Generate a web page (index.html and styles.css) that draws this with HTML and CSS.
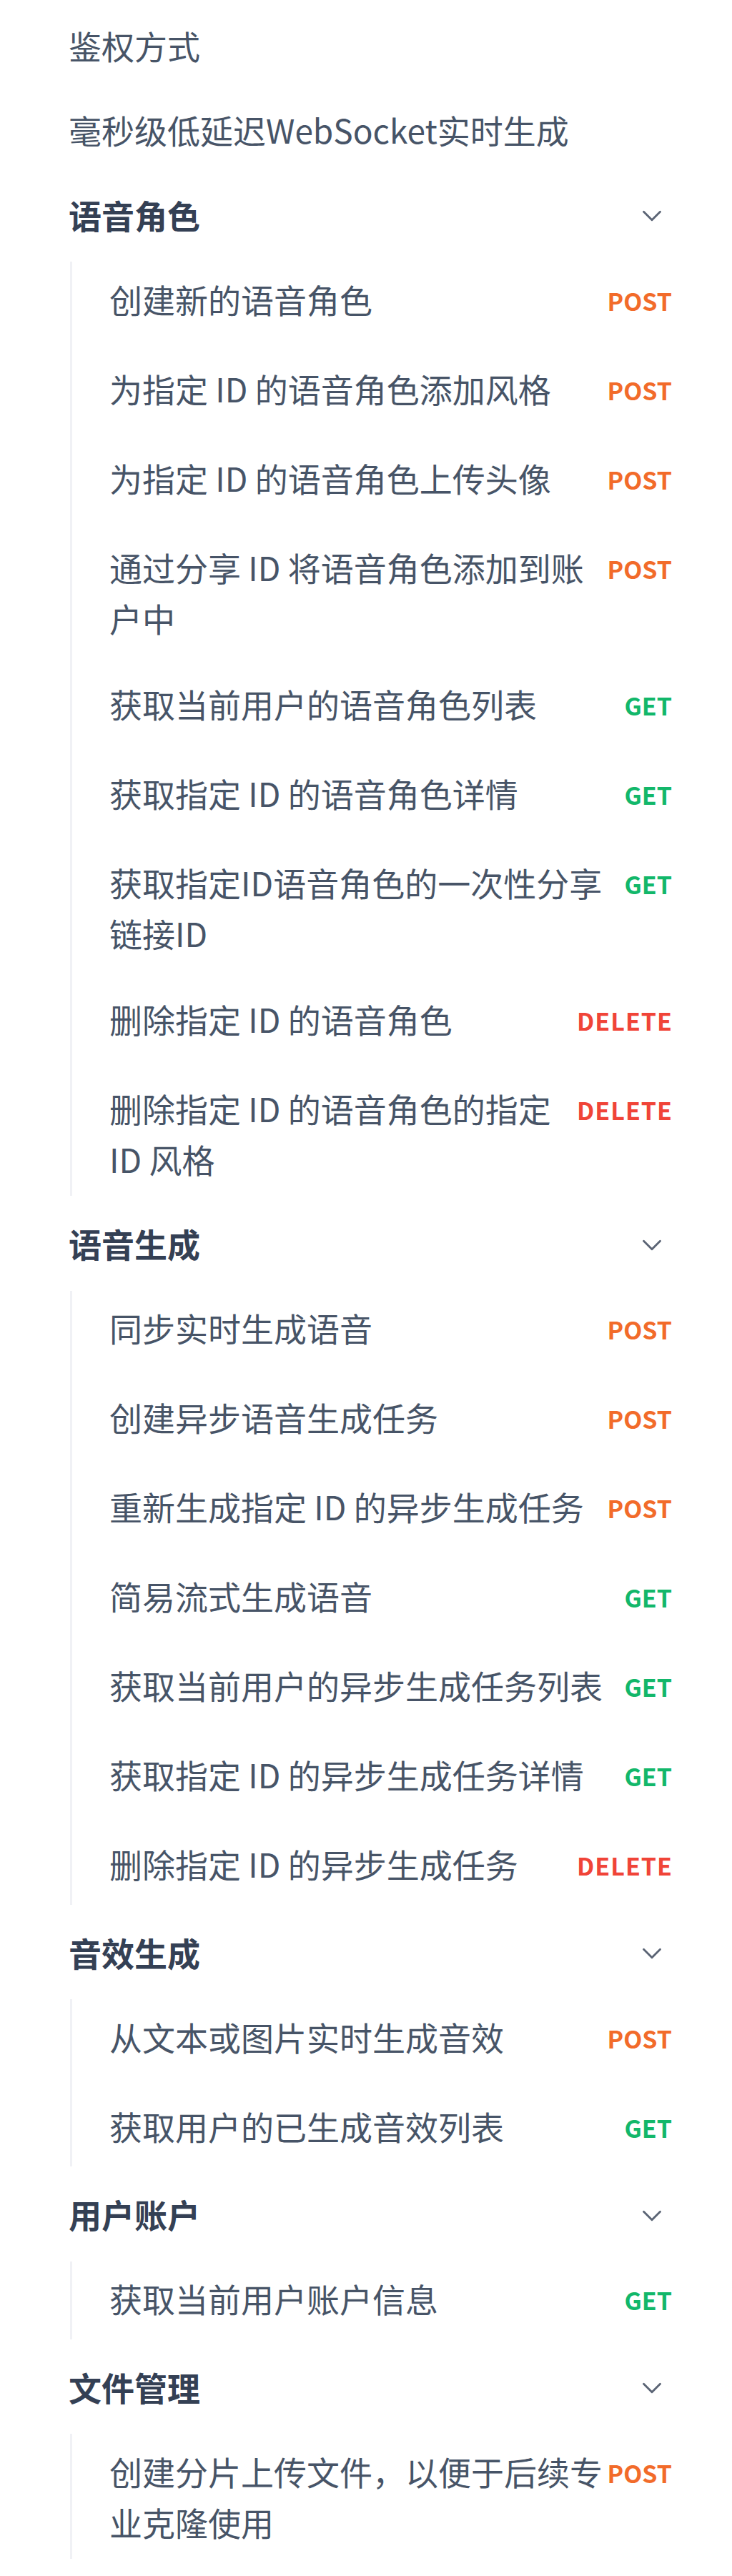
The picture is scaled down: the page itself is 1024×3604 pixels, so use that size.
FILE: index.html
```html
<!DOCTYPE html>
<html lang="zh-CN">
<head>
<meta charset="utf-8">
<title>API 文档导航</title>
<link rel="stylesheet" href="styles.css">
</head>
<body>
<nav class="nav">
  <a class="nav-link">鉴权方式</a>
  <a class="nav-link">毫秒级低延迟WebSocket实时生成</a>

  <section class="section">
    <div class="section-head"><span>语音角色</span><svg class="chev" viewBox="0 0 24 24" fill="none" stroke="currentColor" stroke-width="1.5" stroke-linecap="round" stroke-linejoin="round"><polyline points="6 9 12 15 18 9"/></svg></div>
    <ul class="sub">
      <li class="item"><span class="item-text">创建新的语音角色</span><span class="method post">POST</span></li>
      <li class="item"><span class="item-text">为指定 ID 的语音角色添加风格</span><span class="method post">POST</span></li>
      <li class="item"><span class="item-text">为指定 ID 的语音角色上传头像</span><span class="method post">POST</span></li>
      <li class="item"><span class="item-text">通过分享 ID 将语音角色添加到账户中</span><span class="method post">POST</span></li>
      <li class="item"><span class="item-text">获取当前用户的语音角色列表</span><span class="method get">GET</span></li>
      <li class="item"><span class="item-text">获取指定 ID 的语音角色详情</span><span class="method get">GET</span></li>
      <li class="item"><span class="item-text">获取指定ID语音角色的一次性分享链接ID</span><span class="method get">GET</span></li>
      <li class="item"><span class="item-text">删除指定 ID 的语音角色</span><span class="method delete">DELETE</span></li>
      <li class="item"><span class="item-text">删除指定 ID 的语音角色的指定 ID 风格</span><span class="method delete">DELETE</span></li>
    </ul>
  </section>

  <section class="section">
    <div class="section-head"><span>语音生成</span><svg class="chev" viewBox="0 0 24 24" fill="none" stroke="currentColor" stroke-width="1.5" stroke-linecap="round" stroke-linejoin="round"><polyline points="6 9 12 15 18 9"/></svg></div>
    <ul class="sub">
      <li class="item"><span class="item-text">同步实时生成语音</span><span class="method post">POST</span></li>
      <li class="item"><span class="item-text">创建异步语音生成任务</span><span class="method post">POST</span></li>
      <li class="item"><span class="item-text">重新生成指定 ID 的异步生成任务</span><span class="method post">POST</span></li>
      <li class="item"><span class="item-text">简易流式生成语音</span><span class="method get">GET</span></li>
      <li class="item"><span class="item-text">获取当前用户的异步生成任务列表</span><span class="method get">GET</span></li>
      <li class="item"><span class="item-text">获取指定 ID 的异步生成任务详情</span><span class="method get">GET</span></li>
      <li class="item"><span class="item-text">删除指定 ID 的异步生成任务</span><span class="method delete">DELETE</span></li>
    </ul>
  </section>

  <section class="section">
    <div class="section-head"><span>音效生成</span><svg class="chev" viewBox="0 0 24 24" fill="none" stroke="currentColor" stroke-width="1.5" stroke-linecap="round" stroke-linejoin="round"><polyline points="6 9 12 15 18 9"/></svg></div>
    <ul class="sub">
      <li class="item"><span class="item-text">从文本或图片实时生成音效</span><span class="method post">POST</span></li>
      <li class="item"><span class="item-text">获取用户的已生成音效列表</span><span class="method get">GET</span></li>
    </ul>
  </section>

  <section class="section">
    <div class="section-head"><span>用户账户</span><svg class="chev" viewBox="0 0 24 24" fill="none" stroke="currentColor" stroke-width="1.5" stroke-linecap="round" stroke-linejoin="round"><polyline points="6 9 12 15 18 9"/></svg></div>
    <ul class="sub">
      <li class="item"><span class="item-text">获取当前用户账户信息</span><span class="method get">GET</span></li>
    </ul>
  </section>

  <section class="section">
    <div class="section-head"><span>文件管理</span><svg class="chev" viewBox="0 0 24 24" fill="none" stroke="currentColor" stroke-width="1.5" stroke-linecap="round" stroke-linejoin="round"><polyline points="6 9 12 15 18 9"/></svg></div>
    <ul class="sub">
      <li class="item"><span class="item-text">创建分片上传文件，以便于后续专业克隆使用</span><span class="method post">POST</span></li>
    </ul>
  </section>
</nav>
</body>
</html>
```

FILE: styles.css
```css
* {
  box-sizing: border-box;
  margin: 0;
  padding: 0;
}

html,
body {
  background: #ffffff;
}

body {
  font-family: "Noto Sans CJK SC", "Noto Sans", sans-serif;
  font-size: 46px;
  color: #4a5568;
}

.nav {
  display: flex;
  flex-direction: column;
  gap: 14.5px;
  padding: 11px 84px 20px 96px;
}

.nav-link {
  display: block;
  padding: 16.5px 0;
  line-height: 71px;
  color: #475467;
  text-decoration: none;
}

.section-head {
  display: flex;
  align-items: center;
  justify-content: space-between;
  padding: 16.5px 0;
  line-height: 71px;
  font-weight: 700;
  color: #344054;
}

.chev {
  width: 46px;
  height: 46px;
  margin-top: 4px;
  margin-right: 5px;
  color: #5b6475;
  flex-shrink: 0;
}

.sub {
  list-style: none;
  margin: 14px 0 0 2px;
  border-left: 3px solid #f0f1f5;
  padding-left: 52px;
  display: flex;
  flex-direction: column;
  gap: 16px;
}

.item {
  display: flex;
  align-items: flex-start;
  gap: 6px;
  padding: 16.5px 0;
  color: #475467;
}

.item-text {
  flex: 1;
  min-width: 0;
  line-height: 71px;
}

.method {
  flex-shrink: 0;
  font-family: "Noto Sans CJK SC", "Noto Sans", sans-serif;
  font-size: 34px;
  font-weight: 700;
  line-height: 76px;
}

.post {
  color: #f26b2a;
}

.get {
  color: #12b76a;
}

.delete {
  color: #f04438;
  letter-spacing: 1px;
  margin-right: -1px;
}
```
